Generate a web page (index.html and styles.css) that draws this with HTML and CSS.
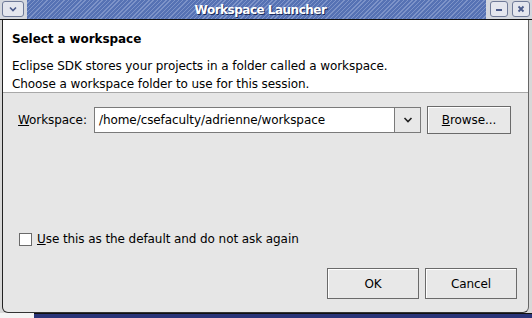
FILE: index.html
```html
<!DOCTYPE html>
<html>
<head>
  <title>Workspace Launcher</title>
  <link rel="stylesheet" href="styles.css">
</head>
<body>
  <div class="window">
    <!-- Title bar -->
    <div class="titlebar">
      <div class="wm-btn menu-btn">
        <svg viewBox="0 0 10 10"><path d="M2 3.5 L5 6.5 L8 3.5" fill="none" stroke="#4a5a8a" stroke-width="1.6"/></svg>
      </div>
      <div class="title-stripes">
        <span class="title-text">Workspace Launcher</span>
      </div>
      <div class="wm-btn">
        <svg viewBox="0 0 10 10"><rect x="2" y="5" width="6" height="2" fill="#4a5a8a"/></svg>
      </div>
      <div class="wm-btn">
        <svg viewBox="0 0 10 10"><path d="M2.5 2.5 L7.5 7.5 M7.5 2.5 L2.5 7.5" stroke="#4a5a8a" stroke-width="1.8"/></svg>
      </div>
    </div>

    <!-- Dialog -->
    <div class="dialog">
      <div class="banner">
        <div class="banner-title">Select a workspace</div>
        <div class="banner-msg">Eclipse SDK stores your projects in a folder called a workspace.<br>Choose a workspace folder to use for this session.</div>
      </div>

      <div class="content">
        <div class="ws-row">
          <label class="ws-label"><u>W</u>orkspace:</label>
          <div class="combo">
            <div class="combo-text">/home/csefaculty/adrienne/workspace</div>
            <div class="combo-btn">
              <svg viewBox="0 0 12 12"><path d="M2.5 4 L6 7.5 L9.5 4" fill="none" stroke="#222" stroke-width="1.6"/></svg>
            </div>
          </div>
          <button class="btn browse-btn"><u>B</u>rowse...</button>
        </div>

        <div class="spacer"></div>

        <div class="check-row">
          <span class="checkbox"></span>
          <span><u>U</u>se this as the default and do not ask again</span>
        </div>

        <div class="actions">
          <button class="btn action-btn">OK</button>
          <button class="btn action-btn">Cancel</button>
        </div>
      </div>
    </div>
  </div>

  <!-- Desktop behind the window -->
  <div class="desktop">
    <span class="desk-left"></span>
    <span class="desk-bar"></span>
  </div>
</body>
</html>
```

FILE: styles.css
```css
body {
  margin: 0;
  padding: 0;
  width: 532px;
  height: 318px;
  overflow: hidden;
  background: #d8d8d8;
  font-family: 'DejaVu Sans', sans-serif;
  font-size: 12px;
  letter-spacing: -0.08px;
  color: #000;
}

.window {
  height: 313px;
  display: flex;
  flex-direction: column;
}

/* Title bar */
.titlebar {
  height: 19px;
  display: flex;
  align-items: stretch;
  background: #d4d7de;
  border-bottom: 1px solid #111;
}

.wm-btn {
  width: 18px;
  height: 16px;
  margin: 1px 2px 0 2px;
  background: #e4e6ee;
  border: 1px solid #6f7a98;
  border-radius: 3px;
  display: flex;
  align-items: center;
  justify-content: center;
  box-sizing: border-box;
}

.wm-btn svg {
  width: 10px;
  height: 10px;
}

.menu-btn {
  width: 22px;
  margin-right: 3px;
}

.title-stripes {
  flex: 1;
  display: flex;
  align-items: center;
  justify-content: center;
  background: repeating-linear-gradient(135deg, #5672b4 0px, #5672b4 2px, #7d93c8 2px, #7d93c8 3px);
  margin-right: 2px;
}

.title-text {
  color: #fff;
  font-weight: bold;
  font-size: 12px;
  letter-spacing: -0.5px;
  text-shadow: 1px 1px 0 #1a2a5a;
  margin-left: 8px;
}

/* Dialog body */
.dialog {
  flex: 1;
  display: flex;
  flex-direction: column;
  margin-right: 3px;
  border-left: 1px solid #222;
  margin-left: 2px;
  border-bottom: 1px solid #333;
  border-right: 1px solid #666;
  border-radius: 0 0 6px 6px;
  background: #e6e6e6;
  overflow: hidden;
}

.banner {
  background: #fff;
  height: 73px;
  padding: 12px 10px 0 9px;
  box-sizing: border-box;
  border-bottom: 1px solid #a8a8a8;
}

.banner-title {
  font-weight: bold;
  font-size: 12px;
  margin-bottom: 11px;
}

.banner-msg {
  line-height: 18px;
}

.content {
  flex: 1;
  display: flex;
  flex-direction: column;
  padding: 13px 11px 13px 15px;
}

.ws-row {
  display: flex;
  align-items: center;
  height: 27px;
}

.ws-label {
  width: 76px;
}

.combo {
  display: flex;
  height: 26px;
}

.combo-text {
  width: 301px;
  box-sizing: border-box;
  border: 1px solid #7a7a7a;
  background: #fff;
  padding: 0 4px;
  display: flex;
  align-items: center;
}

.combo-btn {
  width: 26px;
  border: 1px solid #7a7a7a;
  border-left: none;
  background: #e8e8e8;
  display: flex;
  align-items: center;
  justify-content: center;
  box-sizing: border-box;
}

.combo-btn svg {
  width: 12px;
  height: 12px;
}

.btn {
  font-family: 'DejaVu Sans', sans-serif;
  font-size: 12px;
  letter-spacing: -0.08px;
  color: #000;
  background: #e8e8e8;
  border: 1px solid #6a6a6a;
  box-shadow: inset 1px 1px 0 #fff;
  padding: 0;
}

.browse-btn {
  width: 84px;
  height: 28px;
  margin-left: 6px;
}

.spacer {
  flex: 1;
}

.check-row {
  display: flex;
  align-items: center;
  gap: 5px;
  padding-left: 1px;
  margin-bottom: 22px;
}

.checkbox {
  width: 13px;
  height: 13px;
  border: 1px solid #6a6a6a;
  background: #fff;
  box-sizing: border-box;
}

.actions {
  display: flex;
  justify-content: flex-end;
  gap: 6px;
}

.action-btn {
  width: 92px;
  height: 31px;
}

/* Desktop strip */
.desktop {
  height: 5px;
  display: flex;
}

.desk-left {
  width: 34px;
  background: #f4f4f4;
}

.desk-bar {
  flex: 1;
  background: #2a3478;
  border-top: 1px solid #111;
}
```
